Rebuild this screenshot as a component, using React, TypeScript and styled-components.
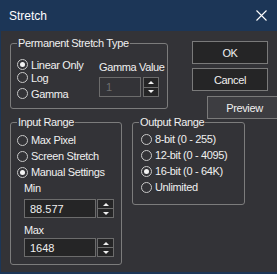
import styled, { createGlobalStyle } from 'styled-components';

const GlobalStyle = createGlobalStyle`
  html, body {
    margin: 0;
    padding: 0;
    background: #333337;
  }
  body {
    font-family: 'Liberation Sans', Arial, sans-serif;
  }
`;

const Window = styled.div`
  width: 277px;
  height: 274px;
  box-sizing: border-box;
  display: flex;
  flex-direction: column;
  overflow: hidden;
  background: #333337;
  border-left: 1px solid #1c3657;
  border-bottom: 2px solid #1c3657;
  color: #f0f0f0;
  font-size: 11px;
  letter-spacing: -0.35px;
`;

const TitleBar = styled.div`
  height: 31px;
  flex-shrink: 0;
  display: flex;
  align-items: center;
  justify-content: space-between;
  padding: 0 10px 0 8px;
  background: #1c3657;
`;

const Title = styled.span`
  font-size: 12px;
  letter-spacing: 0;
  color: #ffffff;
`;

const Body = styled.div`
  display: flex;
  flex-direction: column;
  padding: 5px 0 0 9px;
`;

const TopRow = styled.div`
  display: flex;
  align-items: flex-start;
  height: 79px;
`;

const BottomRow = styled.div`
  display: flex;
  align-items: flex-start;
  gap: 10px;
`;

const Group = styled.fieldset<{ $w: number; $h: number }>`
  box-sizing: border-box;
  flex-shrink: 0;
  width: ${(p) => p.$w}px;
  height: ${(p) => p.$h}px;
  min-width: 0;
  margin: 0;
  padding: 0;
  border: 1px solid #7c7c7c;
  border-radius: 3px;
`;

const Legend = styled.legend`
  margin-left: 6px;
  padding: 0 1px;
  line-height: 14px;
`;

const PermContent = styled.div`
  display: flex;
  padding-left: 6px;
`;

const RadioCol = styled.div<{ $pt: number; $pl?: number; $w?: number }>`
  display: flex;
  flex-direction: column;
  flex-shrink: 0;
  padding-top: ${(p) => p.$pt}px;
  padding-left: ${(p) => p.$pl ?? 0}px;
  width: ${(p) => (p.$w ? `${p.$w}px` : 'auto')};
`;

const RadioRow = styled.div<{ $h: number; $mt?: number }>`
  display: flex;
  align-items: center;
  height: ${(p) => p.$h}px;
  margin-top: ${(p) => p.$mt ?? 0}px;
  white-space: nowrap;
`;

const Circle = styled.span<{ $on?: boolean }>`
  box-sizing: border-box;
  width: 11px;
  height: 11px;
  flex-shrink: 0;
  display: flex;
  align-items: center;
  justify-content: center;
  border: 1px solid #c8c8c8;
  border-radius: 50%;
  &::after {
    content: '';
    display: ${(p) => (p.$on ? 'block' : 'none')};
    width: 5px;
    height: 5px;
    border-radius: 50%;
    background: #f4f4f4;
  }
`;

const RadioLabel = styled.span`
  margin-left: 3px;
  line-height: 14px;
`;

const GammaCol = styled.div`
  display: flex;
  flex-direction: column;
  flex-shrink: 0;
  padding-top: 10px;
`;

const FieldLabel = styled.div<{ $mt: number; $ml?: number }>`
  line-height: 14px;
  margin-top: ${(p) => p.$mt}px;
  margin-left: ${(p) => p.$ml ?? 0}px;
  white-space: nowrap;
`;

const NumberRow = styled.div<{ $mt: number; $ml?: number; $gap: number }>`
  display: flex;
  gap: ${(p) => p.$gap}px;
  margin-top: ${(p) => p.$mt}px;
  margin-left: ${(p) => p.$ml ?? 0}px;
`;

const NumberInput = styled.input<{ $w: number; $h: number }>`
  box-sizing: border-box;
  flex-shrink: 0;
  width: ${(p) => p.$w}px;
  height: ${(p) => p.$h}px;
  margin: 0;
  padding: 0 0 0 5px;
  border: 1px solid #6c6c6c;
  border-radius: 0;
  outline: none;
  background: #252526;
  color: #f0f0f0;
  font-family: inherit;
  font-size: 11px;
  letter-spacing: 0;
  &:disabled {
    background: #333337;
    color: #6f6f6f;
    padding-left: 6px;
  }
`;

const SpinBox = styled.div<{ $w: number; $h: number }>`
  box-sizing: border-box;
  flex-shrink: 0;
  width: ${(p) => p.$w}px;
  height: ${(p) => p.$h}px;
  display: flex;
  flex-direction: column;
  border: 1px solid #6c6c6c;
  background: #252526;
`;

const SpinHalf = styled.div<{ $down?: boolean }>`
  flex: 1;
  display: flex;
  align-items: center;
  justify-content: center;
  border-top: ${(p) => (p.$down ? '1px solid #6c6c6c' : 'none')};
  &::after {
    content: '';
    width: 0;
    height: 0;
    border-left: 3px solid transparent;
    border-right: 3px solid transparent;
    ${(p) =>
      p.$down ? 'border-top: 3px solid #f0f0f0;' : 'border-bottom: 3px solid #f0f0f0;'}
  }
`;

const ButtonCol = styled.div`
  display: flex;
  flex-direction: column;
  flex-shrink: 0;
  margin: 5px 0 0 24px;
`;

const Button = styled.button<{ $mt?: number; $ml?: number; $w?: number; $light?: boolean }>`
  box-sizing: border-box;
  width: ${(p) => p.$w ?? 76}px;
  height: 23px;
  flex-shrink: 0;
  margin: ${(p) => p.$mt ?? 0}px 0 0 ${(p) => p.$ml ?? 0}px;
  padding: 0;
  border: 1px solid #7a7a7a;
  border-radius: 0;
  background: ${(p) => (p.$light ? '#3d3d41' : '#252526')};
  color: #f0f0f0;
  font-family: inherit;
  font-size: 11px;
  letter-spacing: -0.35px;
`;

const InputContent = styled.div`
  display: flex;
  flex-direction: column;
  padding: 3px 0 0 6px;
`;

function Radio({ label, on, h, mt }: { label: string; on?: boolean; h: number; mt?: number }) {
  return (
    <RadioRow $h={h} $mt={mt}>
      <Circle $on={on} />
      <RadioLabel>{label}</RadioLabel>
    </RadioRow>
  );
}

function Spinner({ value, w, h, disabled }: { value: string; w: number; h: number; disabled?: boolean }) {
  return (
    <>
      <NumberInput $w={w} $h={h} value={value} readOnly disabled={disabled} />
      <SpinBox $w={disabled ? 16 : 17} $h={h}>
        <SpinHalf />
        <SpinHalf $down />
      </SpinBox>
    </>
  );
}

export default function App() {
  return (
    <>
      <GlobalStyle />
      <Window>
        <TitleBar>
          <Title>Stretch</Title>
          <svg width="11" height="11" viewBox="0 0 11 11">
            <path d="M0.5 0.5 L10.5 10.5 M10.5 0.5 L0.5 10.5" stroke="#ffffff" strokeWidth="1.1" />
          </svg>
        </TitleBar>
        <Body>
          <TopRow>
            <Group $w={158} $h={73}>
              <Legend>Permanent Stretch Type</Legend>
              <PermContent>
                <RadioCol $pt={8} $w={82}>
                  <Radio label="Linear Only" on h={13} />
                  <Radio label="Log" h={13} />
                  <Radio label="Gamma" h={13} mt={3} />
                </RadioCol>
                <GammaCol>
                  <FieldLabel $mt={0}>Gamma Value</FieldLabel>
                  <NumberRow $mt={3} $gap={2}>
                    <Spinner value="1" w={42} h={20} disabled />
                  </NumberRow>
                </GammaCol>
              </PermContent>
            </Group>
            <ButtonCol>
              <Button>OK</Button>
              <Button $mt={4}>Cancel</Button>
              <Button $mt={5} $ml={15} $w={75} $light>
                Preview
              </Button>
            </ButtonCol>
          </TopRow>
          <BottomRow>
            <Group $w={112} $h={150}>
              <Legend>Input Range</Legend>
              <InputContent>
                <Radio label="Max Pixel" h={16} />
                <Radio label="Screen Stretch" h={16} />
                <Radio label="Manual Settings" on h={16} />
                <FieldLabel $mt={1} $ml={7}>Min</FieldLabel>
                <NumberRow $mt={4} $ml={7} $gap={1}>
                  <Spinner value="88.577" w={72} h={19} />
                </NumberRow>
                <FieldLabel $mt={5} $ml={7}>Max</FieldLabel>
                <NumberRow $mt={1} $ml={7} $gap={1}>
                  <Spinner value="1648" w={72} h={19} />
                </NumberRow>
              </InputContent>
            </Group>
            <Group $w={113} $h={90}>
              <Legend>Output Range</Legend>
              <RadioCol $pt={2} $pl={8}>
                <Radio label="8-bit (0 - 255)" h={16} />
                <Radio label="12-bit (0 - 4095)" h={16} />
                <Radio label="16-bit (0 - 64K)" on h={16} />
                <Radio label="Unlimited" h={16} />
              </RadioCol>
            </Group>
          </BottomRow>
        </Body>
      </Window>
    </>
  );
}
